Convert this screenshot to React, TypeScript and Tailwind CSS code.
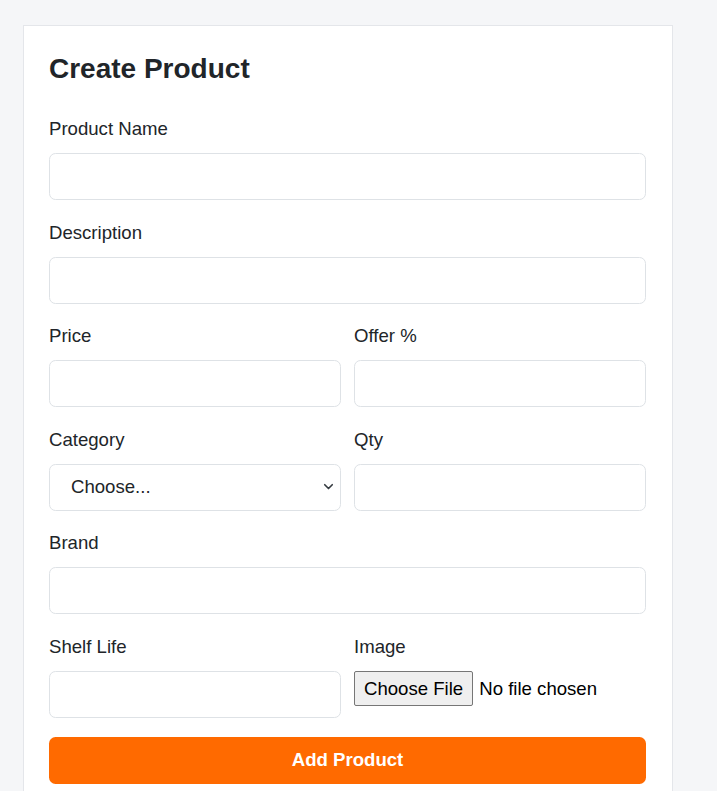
const font = { fontFamily: '"Liberation Sans", Arial, sans-serif' };

const Field: React.FC<{ label: string; children: React.ReactNode }> = ({ label, children }) => (
    <div className="mb-[18.6px]">
        <label className="block mb-[10px] text-[18.6px] leading-[28px] text-[#212529]">{label}</label>
        {children}
    </div>
);

const inputCls =
    "block w-full h-[47px] px-[14px] text-[18.6px] text-[#212529] bg-white border border-[#dee2e6] rounded-[6.5px] outline-none";

export default function App() {
    return (
        <div className="min-h-screen bg-[#f5f6f8] pt-[25px] pl-[23px]" style={font}>
            <div className="w-[650px] bg-white border border-[#e4e6ea] pl-[25px] pr-[26px] pt-[25px] pb-[25px]">
                <h2 className="text-[28px] leading-[35px] font-bold text-[#212529] mb-[29px]">Create Product</h2>

                <form onSubmit={(e) => e.preventDefault()}>
                    <Field label="Product Name">
                        <input type="text" className={inputCls} />
                    </Field>

                    <Field label="Description">
                        <input type="text" className={inputCls} />
                    </Field>

                    <div className="grid grid-cols-2 gap-x-[13px]">
                        <Field label="Price">
                            <input type="number" className={inputCls} />
                        </Field>
                        <Field label="Offer %">
                            <input type="number" className={inputCls} />
                        </Field>

                        <Field label="Category">
                            <div className="relative">
                                <select
                                    className={inputCls + " appearance-none pl-[21px] pr-[40px] text-[#212529]"}
                                    defaultValue=""
                                >
                                    <option value="">Choose...</option>
                                    <option>Fruits</option>
                                    <option>Vegetables</option>
                                    <option>Dairy</option>
                                </select>
                                <svg
                                    className="absolute right-[5px] top-[17px] pointer-events-none"
                                    width="15"
                                    height="12"
                                    viewBox="0 0 16 16"
                                    fill="none"
                                    stroke="#343a40"
                                    strokeWidth="2.2"
                                    strokeLinecap="round"
                                    strokeLinejoin="round"
                                >
                                    <path d="m3 5 5 5 5-5" />
                                </svg>
                            </div>
                        </Field>
                        <Field label="Qty">
                            <input type="number" className={inputCls} />
                        </Field>
                    </div>

                    <Field label="Brand">
                        <input type="text" className={inputCls} />
                    </Field>

                    <div className="grid grid-cols-2 gap-x-[13px]">
                        <Field label="Shelf Life">
                            <input type="text" className={inputCls} />
                        </Field>
                        <Field label="Image">
                            <input
                                type="file"
                                className="block text-[18.6px] text-[#000] file:mr-[6px] file:h-[35px] file:px-[9px] file:bg-[#efefef] file:border file:border-solid file:border-[#767676] file:rounded-[2px] file:text-[18.6px] file:text-[#000]"
                                style={font}
                            />
                        </Field>
                    </div>

                    <button
                        type="submit"
                        className="w-full h-[47px] bg-[#ff6a00] text-white font-bold text-[18.6px] rounded-[6.5px]"
                    >
                        Add Product
                    </button>
                </form>
            </div>
        </div>
    );
}
